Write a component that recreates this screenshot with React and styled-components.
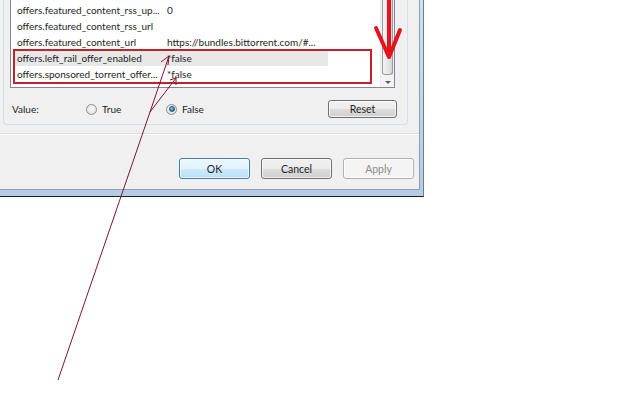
import styled, { createGlobalStyle } from "styled-components";

const GlobalStyle = createGlobalStyle`
  html, body { margin: 0; padding: 0; background: #fff; }
  body {
    font-family: Lato, "Noto Sans", sans-serif;
    font-size: 10px;
    color: #1e1e1e;
  }
`;

const Page = styled.div`
  position: relative;
  width: 640px;
  height: 400px;
  overflow: hidden;
  background: #fff;
`;

const WindowFrame = styled.div`
  width: 424px;
  height: 197px;
  box-sizing: border-box;
  padding: 0 3px 6px 0;
  background: linear-gradient(180deg, #cfe0f1, #b4cbe4);
  border-right: 1px solid #6c7d90;
  border-bottom: 1px solid #1c2026;
`;

const Client = styled.div`
  height: 100%;
  box-sizing: border-box;
  display: flex;
  flex-direction: column;
  background: #f0f0f0;
  border-right: 1px solid #8e9fb2;
  border-bottom: 1px solid #8e9fb2;
`;

const GroupBox = styled.div`
  width: 405px;
  height: 125px;
  margin-left: 3px;
  box-sizing: border-box;
  padding: 0 12px 0 6px;
  border: 1px solid #d5dfe5;
  border-top: none;
  border-radius: 0 0 4px 4px;
  display: flex;
  flex-direction: column;
`;

const ListView = styled.div`
  height: 88px;
  box-sizing: border-box;
  display: flex;
  background: #fff;
  border: 1px solid #828790;
  border-top: none;
`;

const Rows = styled.div`
  flex: 1;
  padding: 2px 0 0 3px;
`;

const Row = styled.div`
  width: 314px;
  height: 16px;
  display: grid;
  grid-template-columns: 153px 161px;
  align-items: center;
  background: ${(p) => (p.$selected ? "#e8e8e8" : "transparent")};
`;

const Cell = styled.span`
  padding-left: ${(p) => (p.$first ? "3px" : "0")};
  white-space: nowrap;
  overflow: hidden;
`;

const ScrollBar = styled.div`
  width: 14px;
  display: flex;
  flex-direction: column;
  background: #f3f3f3;
  border-left: 1px solid #ececec;
  box-sizing: border-box;
`;

const Thumb = styled.div`
  flex: 1;
  margin: 0 1px 2px 1px;
  border: 1px solid #9c9c9c;
  border-top: none;
  border-radius: 0 0 3px 3px;
  background: linear-gradient(90deg, #f4f4f4, #e4e4e4 60%, #d4d4d4);
`;

const ArrowButton = styled.div`
  height: 10px;
  display: flex;
  align-items: center;
  justify-content: center;
  &::after {
    content: "";
    border-left: 3px solid transparent;
    border-right: 3px solid transparent;
    border-top: 3px solid #5a5a5a;
  }
`;

const ValueBar = styled.div`
  flex: 1;
  display: flex;
  align-items: center;
  padding: 6px 0 0 2px;
  margin-right: -2px;
`;

const Label = styled.span`
  width: 74px;
`;

const RadioOption = styled.label`
  display: flex;
  align-items: center;
  gap: 5px;
  width: 80px;
`;

const RadioDot = styled.span`
  width: 11px;
  height: 11px;
  box-sizing: border-box;
  border-radius: 50%;
  border: 1px solid #8f8f8f;
  background: radial-gradient(circle at 50% 40%, #fbfbfb, #d9d9d9);
  display: flex;
  align-items: center;
  justify-content: center;
  &::after {
    content: "";
    display: ${(p) => (p.$checked ? "block" : "none")};
    width: 6px;
    height: 6px;
    border-radius: 50%;
    border: 1px solid #1f4f78;
    box-sizing: border-box;
    background: radial-gradient(circle at 40% 35%, #9fd3f5, #2a76b5 70%);
  }
`;

const Spacer = styled.span`
  flex: 1;
`;

const Button = styled.button`
  width: ${(p) => p.$w || 71}px;
  height: ${(p) => p.$h || 21}px;
  padding: 0;
  font: inherit;
  font-size: 10.5px;
  border-radius: 3px;
  border: 1px solid ${(p) => (p.$default ? "#3c7fb1" : p.disabled ? "#adb2b5" : "#707070")};
  color: ${(p) => (p.disabled ? "#8d8d8d" : "#1e1e1e")};
  background: ${(p) =>
    p.$default
      ? "linear-gradient(180deg, #eef8fd 0%, #e1f3fc 50%, #cdebfb 51%, #b9e1f7 100%)"
      : p.disabled
      ? "#f4f4f4"
      : "linear-gradient(180deg, #f2f2f2 0%, #ebebeb 50%, #dddddd 51%, #cfcfcf 100%)"};
  box-shadow: inset 0 0 0 1px rgba(255, 255, 255, 0.7);
`;

const Separator = styled.div`
  margin-top: 8px;
  border-top: 1px solid #dcdcdc;
  border-bottom: 1px solid #fff;
`;

const ButtonBar = styled.div`
  display: flex;
  justify-content: flex-end;
  gap: 11px;
  padding: 23px 5px 0 0;
`;

const Overlay = styled.svg`
  position: absolute;
  left: 0;
  top: 0;
  pointer-events: none;
`;

const rows = [
  ["offers.featured_content_rss_up...", "0"],
  ["offers.featured_content_rss_url", ""],
  ["offers.featured_content_url", "https://bundles.bittorrent.com/#..."],
  ["offers.left_rail_offer_enabled", "*false", true],
  ["offers.sponsored_torrent_offer...", "*false"],
];

export default function App() {
  return (
    <Page>
      <GlobalStyle />
      <WindowFrame>
        <Client>
          <GroupBox>
            <ListView>
              <Rows>
                {rows.map(([name, value, sel]) => (
                  <Row key={name} $selected={sel}>
                    <Cell $first>{name}</Cell>
                    <Cell>{value}</Cell>
                  </Row>
                ))}
              </Rows>
              <ScrollBar>
                <Thumb />
                <ArrowButton />
              </ScrollBar>
            </ListView>
            <ValueBar>
              <Label>Value:</Label>
              <RadioOption>
                <RadioDot />
                True
              </RadioOption>
              <RadioOption>
                <RadioDot $checked />
                False
              </RadioOption>
              <Spacer />
              <Button $w={69} $h={18}>Reset</Button>
            </ValueBar>
          </GroupBox>
          <Separator />
          <ButtonBar>
            <Button $default>OK</Button>
            <Button>Cancel</Button>
            <Button disabled>Apply</Button>
          </ButtonBar>
        </Client>
      </WindowFrame>

      <Overlay width="640" height="400" viewBox="0 0 640 400">
        <rect x="14" y="50" width="357" height="33" fill="none" stroke="#c3202b" strokeWidth="2" />
        <g stroke="#e3141d" strokeWidth="4" strokeLinecap="round" strokeLinejoin="round" fill="none">
          <path d="M389 -2 L389 55" />
          <path d="M376 28 L389 57 L400 30" />
        </g>
        <g stroke="#7d1530" strokeWidth="1" fill="none">
          <path d="M58 380 L150 112 L169 56" />
          <path d="M150 112 L176 78" />
          <path d="M161 62 L169 56 L168 65" />
          <path d="M170 80 L176 78 L176 85" />
        </g>
      </Overlay>
    </Page>
  );
}
